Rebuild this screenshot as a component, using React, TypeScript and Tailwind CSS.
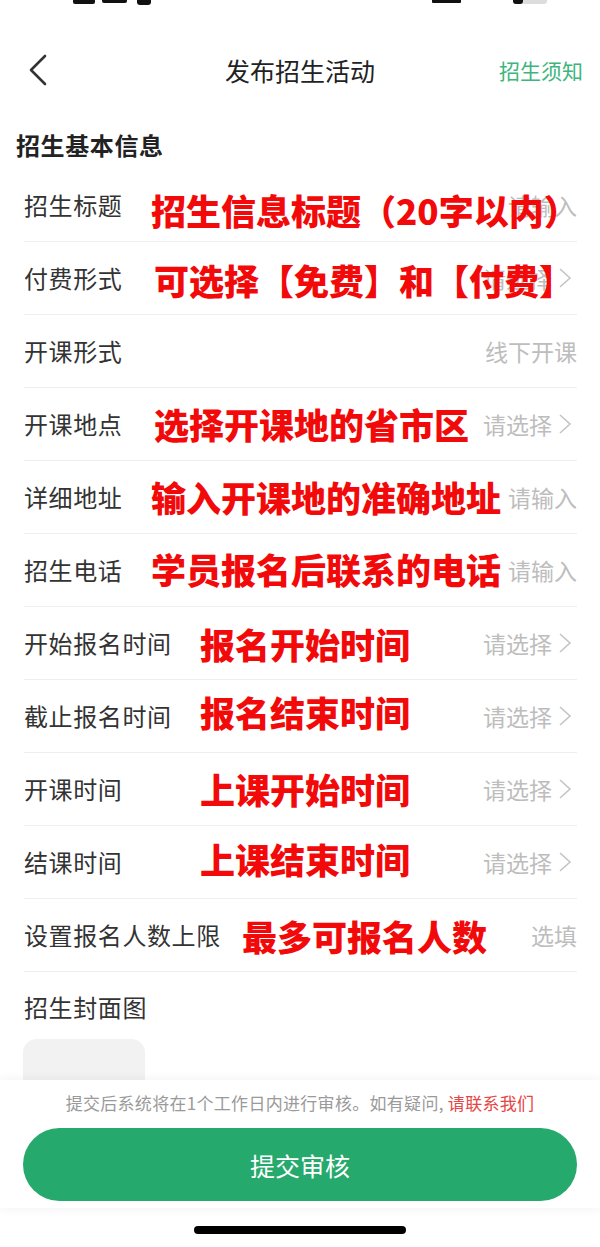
import React from "react";

type Row = {
  label: string;
  value: string;
  arrow?: boolean;
  note: string;
  noteCls: string;
};

const rows: Row[] = [
  { label: "招生标题", value: "请输入", note: "招生信息标题（20字以内）", noteCls: "left-[127px] top-[23px]" },
  { label: "付费形式", value: "请选择", arrow: true, note: "可选择【免费】和【付费】", noteCls: "left-[130px] top-[20px]" },
  { label: "开课形式", value: "线下开课", note: "", noteCls: "" },
  { label: "开课地点", value: "请选择", arrow: true, note: "选择开课地的省市区", noteCls: "left-[130px] top-[18px]" },
  { label: "详细地址", value: "请输入", note: "输入开课地的准确地址", noteCls: "left-[127px] top-[18px]" },
  { label: "招生电话", value: "请输入", note: "学员报名后联系的电话", noteCls: "left-[127px] top-[17px]" },
  { label: "开始报名时间", value: "请选择", arrow: true, note: "报名开始时间", noteCls: "left-[176px] top-[19px]" },
  { label: "截止报名时间", value: "请选择", arrow: true, note: "报名结束时间", noteCls: "left-[176px] top-[14px]" },
  { label: "开课时间", value: "请选择", arrow: true, note: "上课开始时间", noteCls: "left-[176px] top-[18px]" },
  { label: "结课时间", value: "请选择", arrow: true, note: "上课结束时间", noteCls: "left-[176px] top-[15px]" },
  { label: "设置报名人数上限", value: "选填", note: "最多可报名人数", noteCls: "left-[218px] top-[19px]" },
];

function Chevron() {
  return (
    <svg width="14" height="22" viewBox="0 0 14 22" className="ml-[6px] mr-[5px]">
      <polyline points="2,2 12,11 2,20" fill="none" stroke="#c4c4c4" strokeWidth="1.6" />
    </svg>
  );
}

export default function App() {
  return (
    <div
      className="relative w-[600px] h-[1247px] overflow-hidden bg-white text-[#333]"
      style={{ fontFamily: '"Noto Sans CJK SC", "Noto Sans", sans-serif' }}
    >
      {/* clipped status bar */}
      <div className="h-[30px]">
        <svg width="600" height="6" viewBox="0 0 600 6">
          <rect x="73" y="-4" width="22" height="8" rx="2" fill="#111" />
          <rect x="102" y="-4" width="25" height="7" rx="2" fill="#111" />
          <rect x="137" y="-4" width="14" height="9" rx="3" fill="#111" />
          <rect x="432" y="-4" width="29" height="7" rx="1" fill="#111" />
          <rect x="513" y="-4" width="34" height="8" rx="3" fill="#ddd" />
          <rect x="513" y="-4" width="10" height="8" rx="3" fill="#111" />
        </svg>
      </div>

      {/* nav bar */}
      <div className="relative h-[80px] flex items-center justify-center">
        <svg width="20" height="32" viewBox="0 0 20 32" className="absolute left-[28px] top-[24px]">
          <polyline points="17,2 3,16 17,30" fill="none" stroke="#333" strokeWidth="2.6" strokeLinecap="round" strokeLinejoin="round" />
        </svg>
        <span className="text-[25px] leading-[30px] text-[#222]">发布招生活动</span>
        <span className="absolute right-[17px] text-[21px] leading-[28px] text-[#3cb67c]">招生须知</span>
      </div>

      {/* section header */}
      <div className="h-[59px] pt-[23px] pl-[16px]">
        <div className="text-[24px] leading-[24px] tracking-[0.6px] font-bold text-[#222]">招生基本信息</div>
      </div>

      {/* form rows */}
      <div className="ml-[24px] mr-[23px]">
        {rows.map((r) => (
          <div key={r.label} className="relative h-[73px] border-b border-[#eeeeee] flex items-center justify-between">
            <span className="text-[24px] leading-[30px] tracking-[0.6px] text-[#333]">{r.label}</span>
            <span className="flex items-center text-[23px] leading-[30px] text-[#bdbdbd]">
              {r.value}
              {r.arrow && <Chevron />}
            </span>
            {r.note && (
              <span className={`absolute ${r.noteCls} text-[35px] leading-[36px] font-black text-[#f20a0a] whitespace-nowrap`}>
                {r.note}
              </span>
            )}
          </div>
        ))}
      </div>

      {/* cover image */}
      <div className="h-[67px] pt-[23px] pl-[24px]">
        <div className="text-[24px] leading-[24px] tracking-[0.6px] text-[#333]">招生封面图</div>
      </div>
      <div className="ml-[23px] w-[122px] h-[122px] rounded-[14px] bg-[#f2f2f2]" />

      {/* bottom bar */}
      <div className="absolute left-0 right-0 top-[1080px] h-[128px] bg-white shadow-[0_0_12px_rgba(0,0,0,0.06)] px-[23px] pt-[12px]">
        <div className="text-center text-[17px] leading-[22px] tracking-[0.3px] text-[#9a9a9a]">
          提交后系统将在1个工作日内进行审核。如有疑问, <span className="text-[#e64545]">请联系我们</span>
        </div>
        <button className="mt-[14px] w-full h-[73px] rounded-full bg-[#26a96c] text-white text-[25px] leading-[30px]">
          提交审核
        </button>
      </div>

      {/* home indicator */}
      <div className="absolute left-[194px] top-[1226px] w-[212px] h-[8px] rounded-full bg-black" />
    </div>
  );
}
